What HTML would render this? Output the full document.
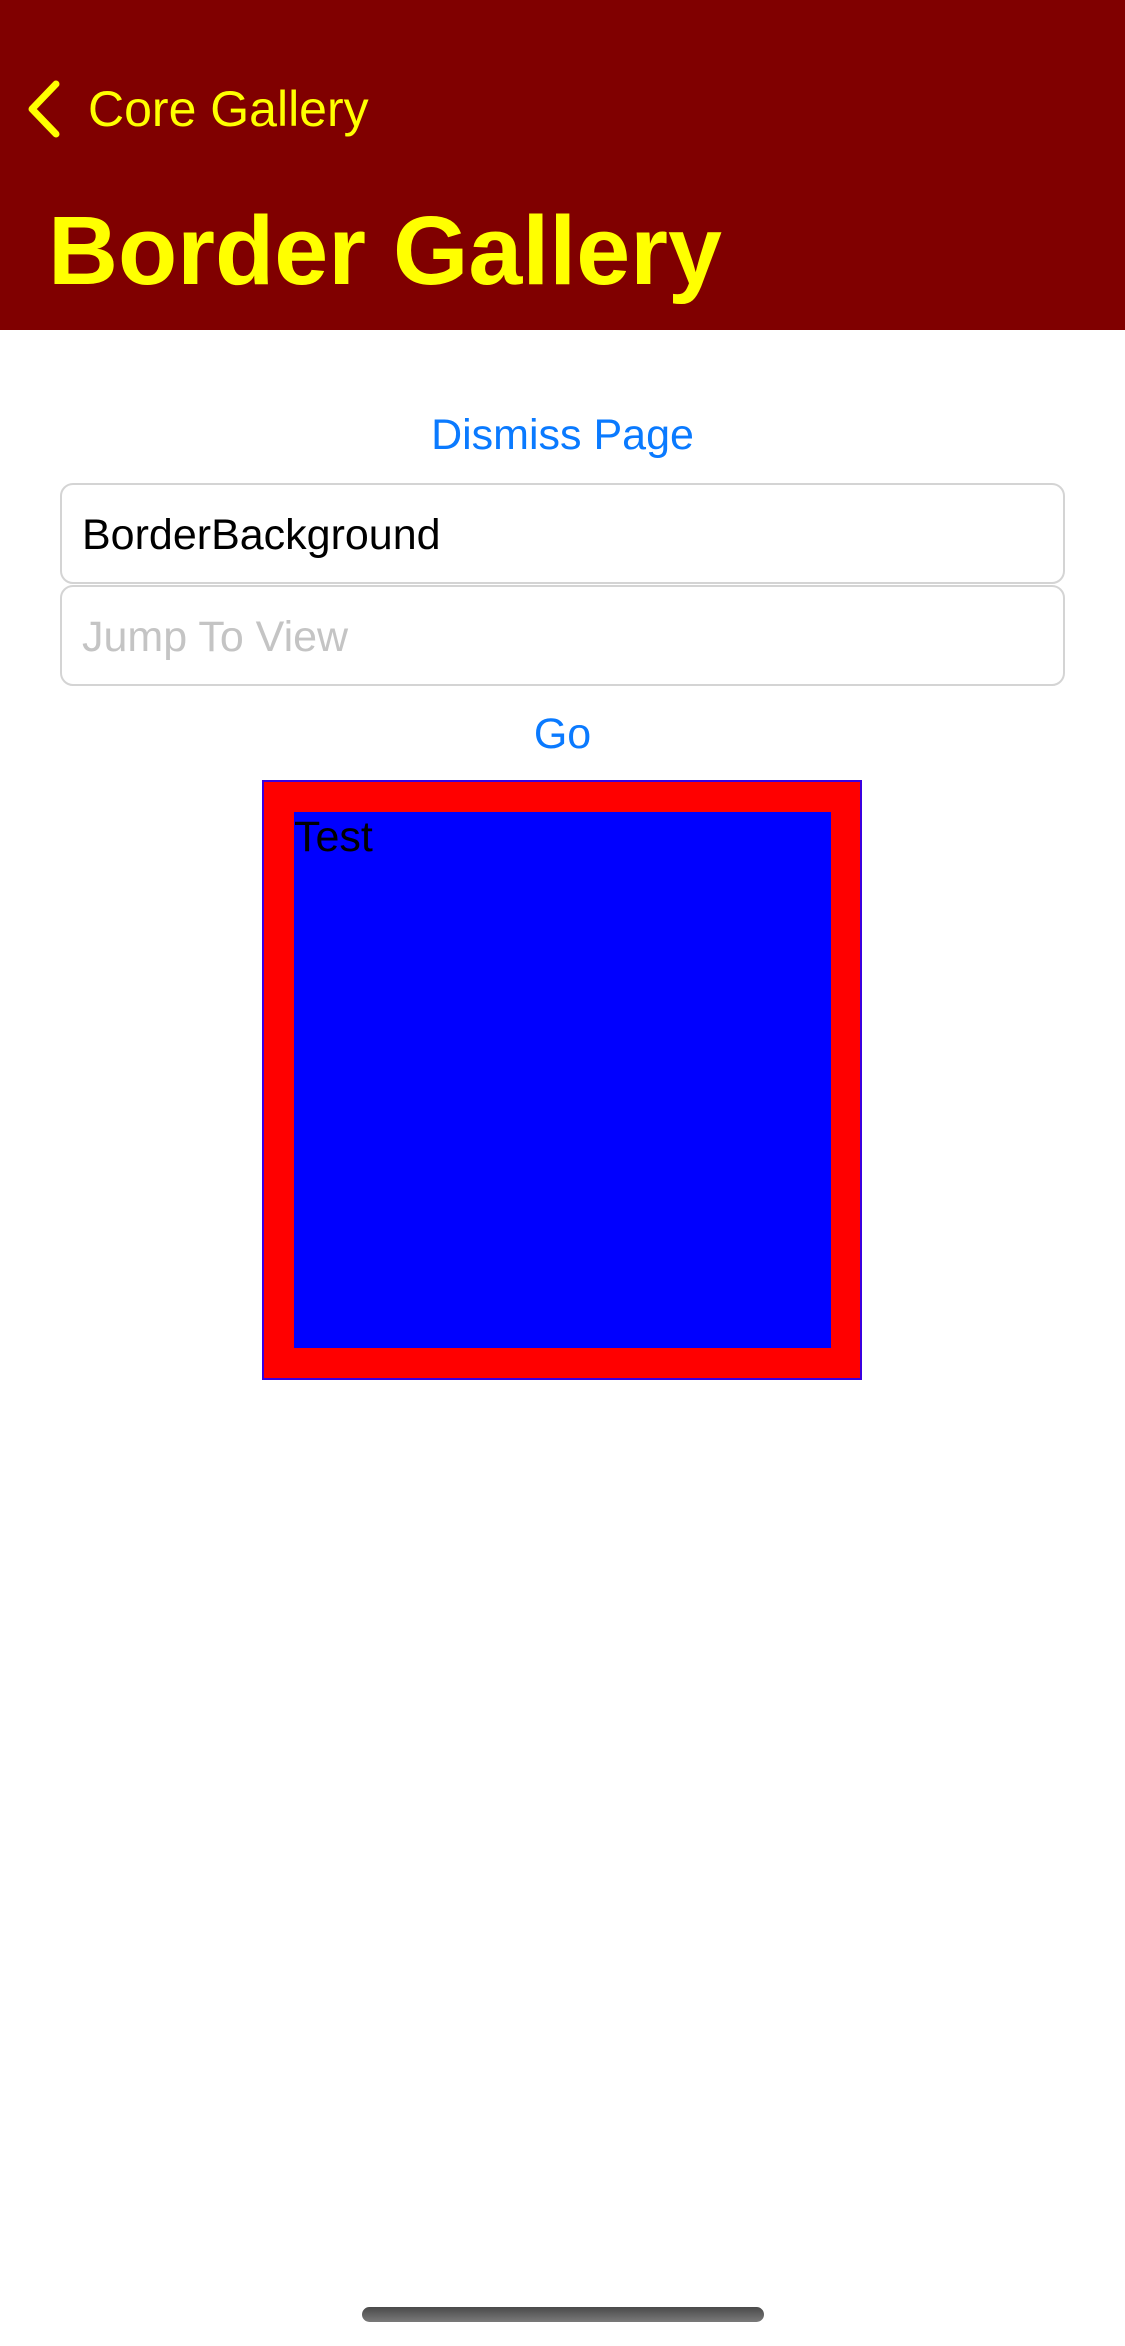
<!DOCTYPE html>
<html><head><meta charset="utf-8"><style>
*{margin:0;padding:0;box-sizing:border-box}
body{width:1125px;height:2346px;background:#fff;position:relative;overflow:hidden;font-family:"Liberation Sans",sans-serif}
.hdr{position:absolute;left:0;top:0;width:1125px;height:330px;background:#800000}
.t{position:absolute;white-space:nowrap;line-height:1}
.field{position:absolute;left:60px;width:1005px;height:101px;border:2px solid #d4d4d4;border-radius:13px;background:#fff}
</style></head><body>
<div class="hdr">
<svg style="position:absolute;left:24px;top:80px" width="40" height="58" viewBox="0 0 40 58"><path d="M32 4 L8 29 L32 54" fill="none" stroke="#ffff00" stroke-width="7" stroke-linecap="round" stroke-linejoin="round"/></svg>
<div class="t" style="left:88px;top:84px;font-size:50px;color:#ffff00">Core Gallery</div>
<div class="t" style="left:48px;top:202px;font-size:97px;font-weight:bold;color:#ffff00">Border Gallery</div>
</div>
<div class="t" style="left:0;width:1125px;text-align:center;top:414px;font-size:43px;color:#0a7aff">Dismiss Page</div>
<div class="field" style="top:483px"><div class="t" style="left:20px;top:29px;font-size:43px;color:#000">BorderBackground</div></div>
<div class="field" style="top:585px"><div class="t" style="left:20px;top:29px;font-size:43px;color:#c4c4c4">Jump To View</div></div>
<div class="t" style="left:0;width:1125px;text-align:center;top:713px;font-size:43px;color:#0a7aff">Go</div>
<div style="position:absolute;left:262px;top:780px;width:600px;height:600px;background:#f00;border:2px solid #3a00e0"></div>
<div style="position:absolute;left:294px;top:812px;width:537px;height:536px;background:#00f"></div>
<div class="t" style="left:294px;top:816px;font-size:43px;color:#000">Test</div>
<div style="position:absolute;left:362px;top:2307px;width:402px;height:15px;border-radius:8px;background:linear-gradient(#4a4a4a,#7a7a7a)"></div>
</body></html>
